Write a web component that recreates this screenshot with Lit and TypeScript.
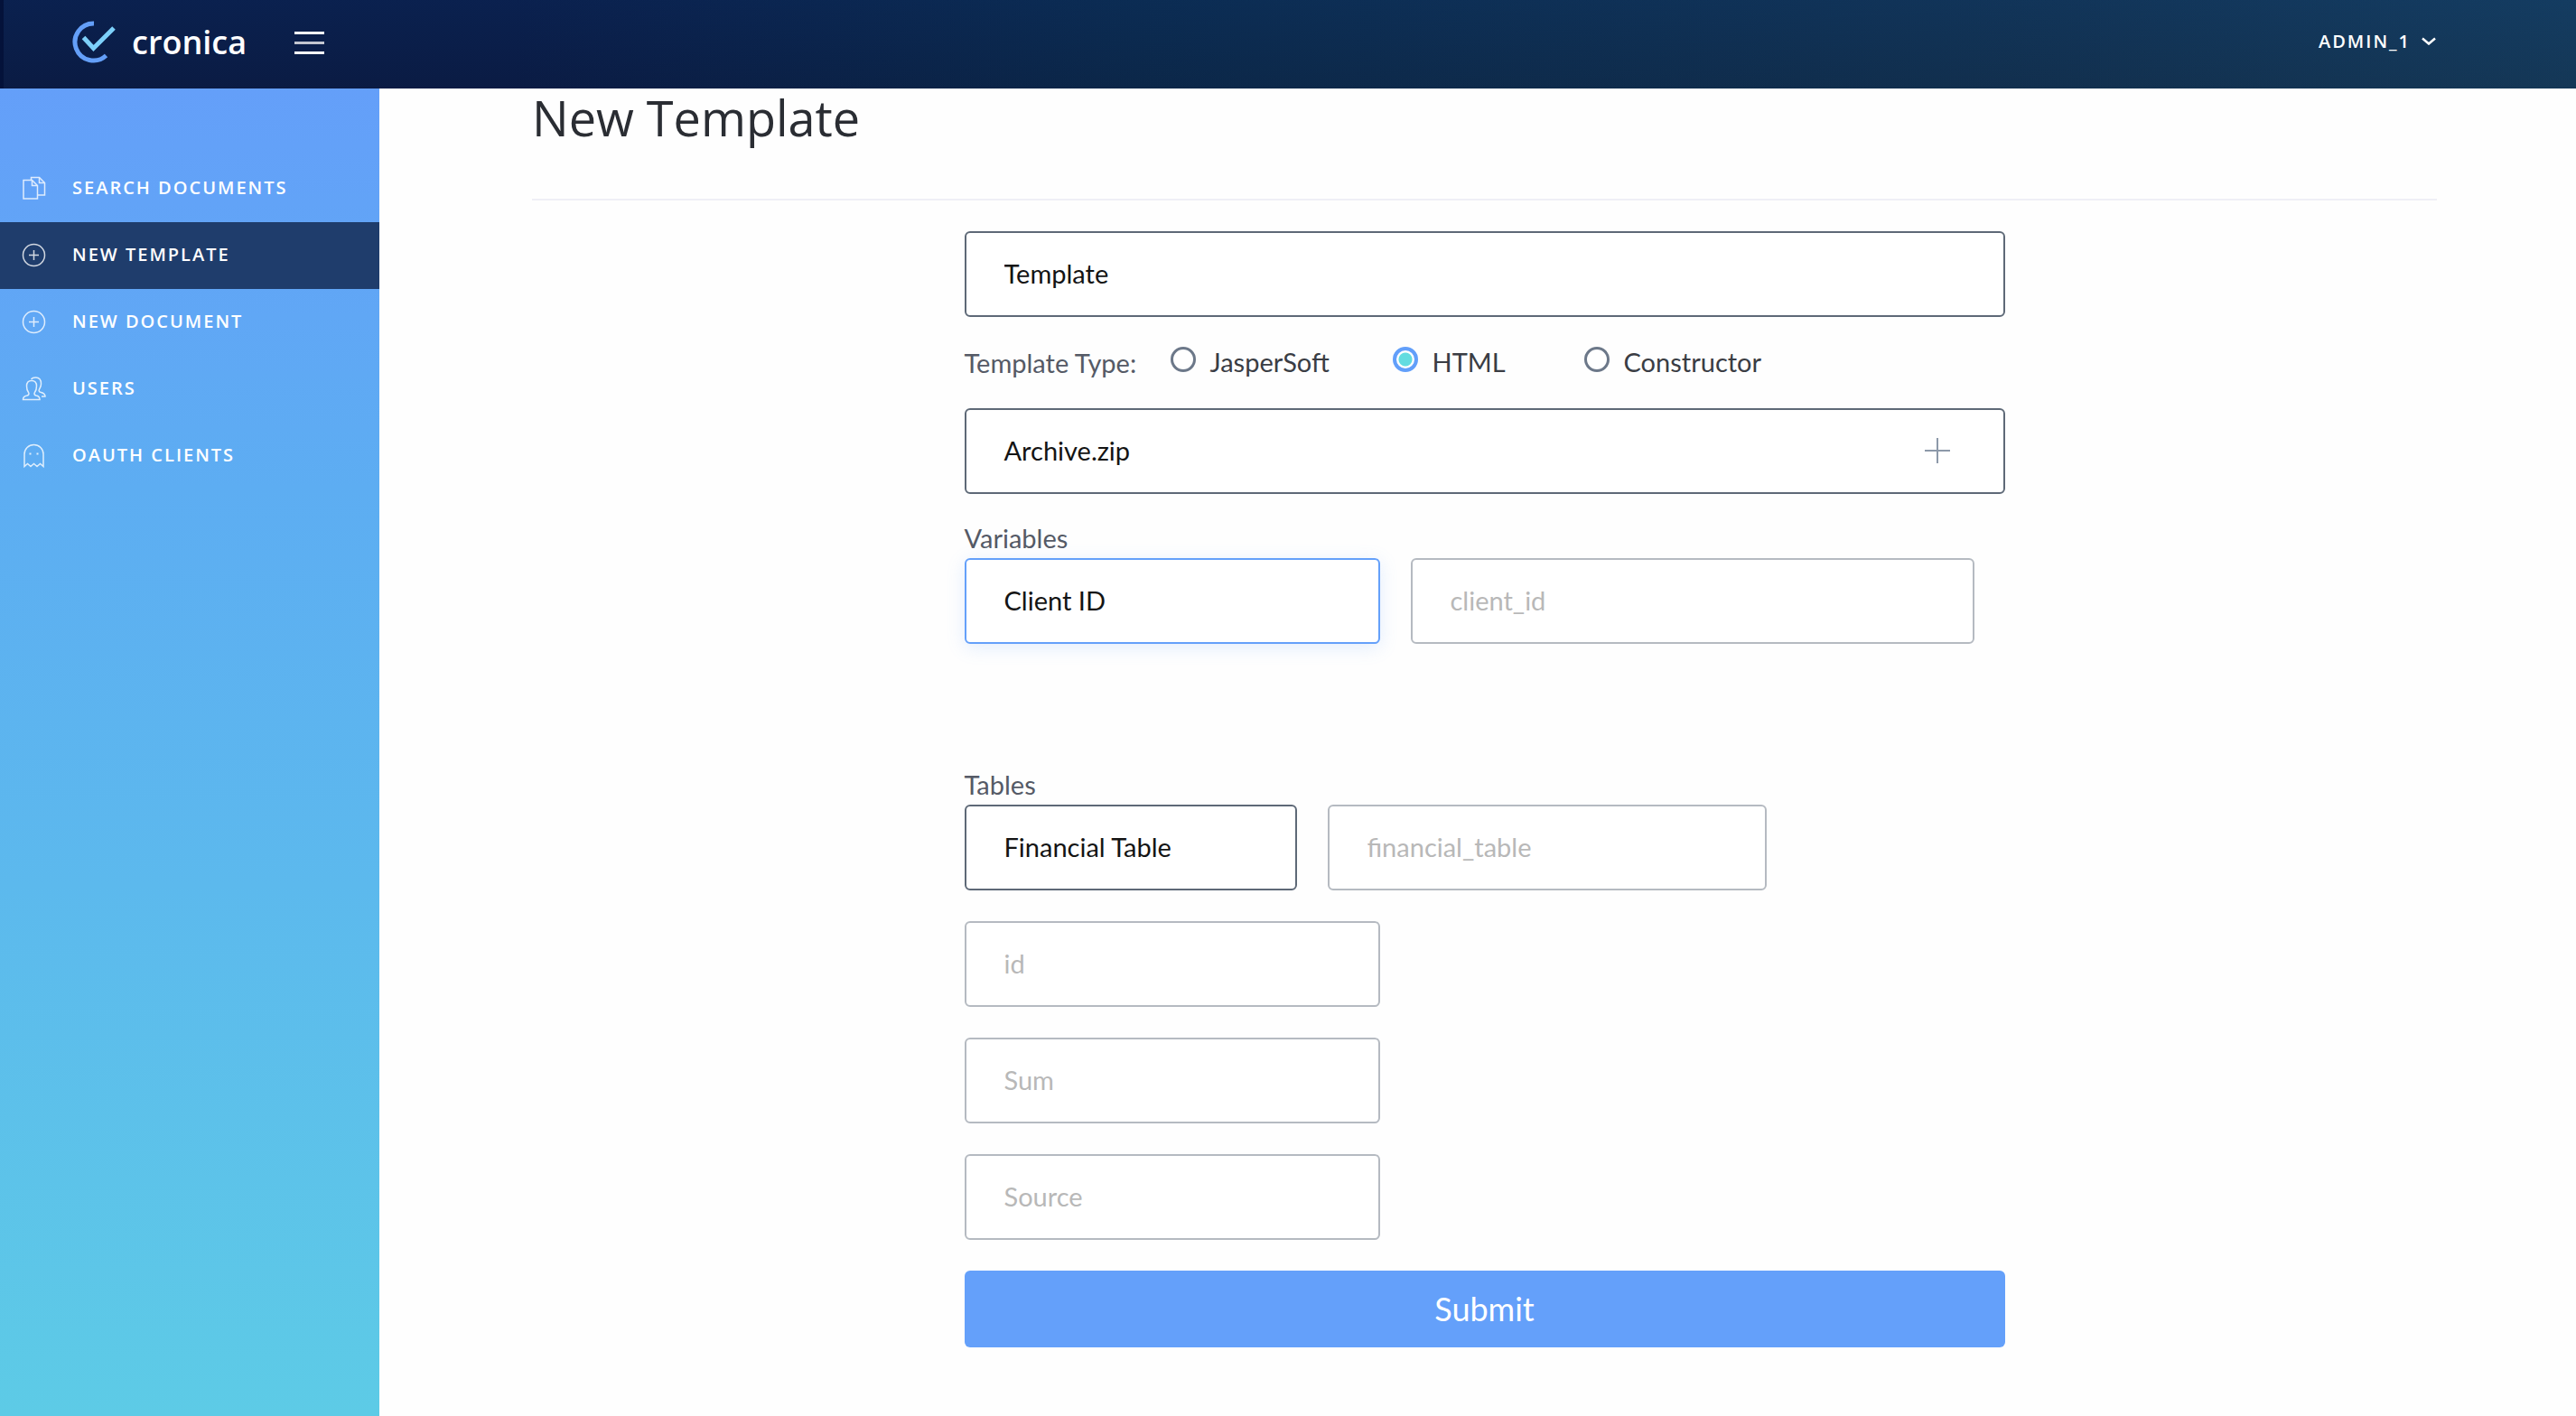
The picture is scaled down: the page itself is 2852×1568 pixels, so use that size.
import { LitElement, html, css, svg, nothing } from "lit";
import { customElement, state } from "lit/decorators.js";
import { classMap } from "lit/directives/class-map.js";

type IconName = "documents" | "plus" | "users" | "ghost";

const icons: Record<IconName, unknown> = {
  documents: svg`
    <path d="M2 4.5h9.5l6 6V25H2z" />
    <path d="M11.5 4.5v6h6" />
    <path d="M10.5 4.5v-3h9l6 6V21h-8" />
    <path d="M19.5 1.5v6h6" />`,
  plus: svg`
    <circle cx="13.5" cy="13.5" r="12" />
    <path d="M13.5 8v11M8 13.5h11" />`,
  users: svg`
    <path d="M1.5 25.5h18.5c0-3-1-4-4-4.5-2-.5-2.5-2-1.5-3.5 1.5-2 2-4 2-7 0-4-2-6-5.5-6s-5.5 2-5.5 6c0 3 .5 5 2 7 1 1.500.5 3-1.500 3.500-3 .5-4.500 1.500-4.500 4.500z" />
    <path d="M10.5 3c1-1.500 3-2 5-2 4 0 6 3 6 7 0 3-1 4-2 6-1 2 0 3 2 3.500 3 .8 4.500 1.500 4.500 4.500h-4" />`,
  ghost: svg`
    <path d="M3 25.500V12a10.500 10.500 0 0 1 21 0v13.500l-3.500-3-3.500 3-3.500-3-3.500 3-3.500-3z" />
    <path d="M8.500 11.500h2M16.500 11.500h2" stroke-width="2" />`,
};

const navItems: { label: string; icon: IconName; active?: boolean }[] = [
  { label: "SEARCH DOCUMENTS", icon: "documents" },
  { label: "NEW TEMPLATE", icon: "plus", active: true },
  { label: "NEW DOCUMENT", icon: "plus" },
  { label: "USERS", icon: "users" },
  { label: "OAUTH CLIENTS", icon: "ghost" },
];

const templateTypes = ["JasperSoft", "HTML", "Constructor"];
const tableColumns = ["id", "Sum", "Source"];

@customElement("app-header")
export class AppHeader extends LitElement {
  static styles = css`
    :host {
      display: block;
      font-family: "Open Sans", "Noto Sans", sans-serif;
      color: #fff;
    }
    .bar {
      box-sizing: border-box;
      height: 98px;
      padding: 0 155px 4px 76px;
      border-left: 4px solid #04123a;
      display: flex;
      align-items: center;
      background:
        linear-gradient(to bottom, rgba(8, 48, 90, 0.2), rgba(8, 20, 30, 0.18)),
        linear-gradient(to right, #0b1d4c 0%, #0b1d4c 20%, #0c2b52 44%, #143659 80%, #173f63 100%);
    }
    .brand {
      display: flex;
      align-items: center;
      gap: 18px;
      color: inherit;
      text-decoration: none;
      font-size: 36px;
      font-weight: 600;
      line-height: 48px;
    }
    .logo {
      width: 48px;
      height: 48px;
    }
    button {
      font: inherit;
      color: inherit;
      background: none;
      border: 0;
      padding: 0;
      cursor: pointer;
    }
    .menu {
      margin-left: 53px;
      width: 33px;
      display: grid;
      gap: 8px;
    }
    .line {
      height: 3px;
      background: #fff;
    }
    .line.mid {
      background: #c3c6d0;
    }
    .user {
      margin-left: auto;
      padding-bottom: 4px;
      display: flex;
      align-items: center;
      gap: 12px;
      font-size: 20px;
      font-weight: 600;
      letter-spacing: 2px;
    }
    .chevron {
      width: 16px;
      height: 10px;
    }
  `;

  render() {
    return html`
      <header class="bar">
        <a class="brand" href="#home">
          <svg class="logo" viewBox="0 0 48 48" fill="none" stroke-width="5" aria-hidden="true">
            <path d="M24 3A20.500 20.500 0 1 0 37.500 38.500" stroke="#649ff8" />
            <path d="M12.500 18.500 23.500 30.500 46 8" stroke="#7dd0fa" />
          </svg>
          <span>cronica</span>
        </a>
        <button class="menu" type="button" aria-label="Menu">
          <span class="line"></span>
          <span class="line mid"></span>
          <span class="line"></span>
        </button>
        <button class="user" type="button">
          <span>ADMIN_1</span>
          <svg class="chevron" viewBox="0 0 16 10" fill="none" stroke="#fff" stroke-width="2.5" aria-hidden="true">
            <path d="M1 2.500 8 8.500 15 2.500" />
          </svg>
        </button>
      </header>
    `;
  }
}

@customElement("app-sidebar")
export class AppSidebar extends LitElement {
  static styles = css`
    :host {
      display: block;
      font-family: "Open Sans", "Noto Sans", sans-serif;
      background: linear-gradient(to bottom, #649ff9 0%, #5dadf2 30%, #5cb9ed 60%, #5dcbe6 100%);
    }
    .nav {
      display: flex;
      flex-direction: column;
      padding-top: 74px;
    }
    .item {
      display: flex;
      align-items: center;
      gap: 28px;
      height: 74px;
      padding-left: 24px;
      color: #fff;
      text-decoration: none;
      font-size: 20px;
      font-weight: 600;
      letter-spacing: 2px;
    }
    .item.active {
      background: #1f3d6c;
    }
    .icon {
      width: 28px;
      height: 28px;
      opacity: 0.8;
    }
    .label {
      padding-bottom: 4px;
    }
  `;

  render() {
    return html`
      <nav class="nav">
        ${navItems.map(
          (item) => html`
            <a
              class=${classMap({ item: true, active: !!item.active })}
              href="#"
              aria-current=${item.active ? "page" : nothing}
            >
              <svg class="icon" viewBox="0 0 28 28" fill="none" stroke="#fff" stroke-width="1.5" aria-hidden="true">
                ${icons[item.icon]}
              </svg>
              <span class="label">${item.label}</span>
            </a>
          `,
        )}
      </nav>
    `;
  }
}

@customElement("template-form")
export class TemplateForm extends LitElement {
  static styles = css`
    :host {
      display: block;
      font-family: Lato, "Open Sans", sans-serif;
      font-size: 29px;
      font-weight: 400;
      line-height: 34px;
      color: #3a3d44;
    }
    .form {
      max-width: 1152px;
      margin: 0 auto;
      padding: 34px 0 76px;
    }
    .field {
      box-sizing: border-box;
      display: block;
      width: 100%;
      min-width: 0;
      height: 95px;
      padding: 0 42px 2px;
      border: 2px solid #b5bac1;
      border-radius: 6px;
      background: #fff;
      color: #141414;
      font: inherit;
      outline: none;
    }
    .field::placeholder {
      color: #b8b8b8;
      opacity: 1;
    }
    .field.filled {
      border-color: #5e6977;
    }
    .field.current {
      border-color: #64a0fa;
      box-shadow: 0 4px 20px rgba(100, 160, 250, 0.18);
    }
    .types {
      display: grid;
      grid-template-columns: 228px 246px 212px auto;
      align-items: center;
      height: 101px;
    }
    .caption {
      color: #555a66;
    }
    .type {
      display: flex;
      align-items: flex-start;
      gap: 16px;
      padding-bottom: 2px;
    }
    .radio {
      appearance: none;
      box-sizing: border-box;
      width: 28px;
      height: 28px;
      margin: 0;
      border: 3px solid #6c7889;
      border-radius: 50%;
      background: #fff;
    }
    .radio:checked {
      border: 4px solid #629ffa;
      background: radial-gradient(circle, #63dce0 0 7px, #fff 8px);
    }
    .upload {
      display: flex;
      align-items: center;
      justify-content: space-between;
      padding-right: 58px;
      cursor: pointer;
    }
    .file {
      position: absolute;
      width: 1px;
      height: 1px;
      opacity: 0;
    }
    .add {
      width: 30px;
      height: 30px;
    }
    .variables {
      padding: 32px 0 139px;
    }
    .group .caption {
      display: block;
      margin-bottom: 5px;
    }
    .pair {
      display: grid;
      gap: 34px;
    }
    .variable {
      grid-template-columns: 460fr 624fr;
      padding-right: 34px;
    }
    .tables {
      grid-template-columns: 368fr 486fr 230fr;
    }
    .columns {
      display: grid;
      grid-template-columns: 460fr 658fr;
      gap: 34px;
      padding: 34px 0;
    }
    .columns .field {
      grid-column: 1;
    }
    .submit {
      display: block;
      width: 100%;
      height: 85px;
      padding: 0 0 2px;
      border: 0;
      border-radius: 6px;
      background: #64a0fa;
      color: #fff;
      font: inherit;
      font-size: 36px;
      cursor: pointer;
    }
  `;

  @state() private type = "HTML";

  render() {
    return html`
      <form class="form" @submit=${(e: Event) => e.preventDefault()}>
        <input class="field filled" aria-label="Template name" .value=${"Template"} />

        <div class="types" role="radiogroup" aria-labelledby="type-caption">
          <span class="caption" id="type-caption">Template Type:</span>
          ${templateTypes.map(
            (t) => html`
              <label class="type">
                <input
                  class="radio"
                  type="radio"
                  name="type"
                  .checked=${this.type === t}
                  @change=${() => (this.type = t)}
                />
                <span>${t}</span>
              </label>
            `,
          )}
        </div>

        <label class="field filled upload">
          <input class="file" type="file" />
          <span>Archive.zip</span>
          <svg class="add" viewBox="0 0 30 30" fill="none" stroke="#8d99a9" stroke-width="2" aria-hidden="true">
            <path d="M15 1v28M1 15h28" />
          </svg>
        </label>

        <div class="group variables">
          <label class="caption" for="variable">Variables</label>
          <div class="pair variable">
            <input class="field current" id="variable" .value=${"Client ID"} />
            <input class="field" placeholder="client_id" aria-label="Variable key" />
          </div>
        </div>

        <div class="group">
          <label class="caption" for="table">Tables</label>
          <div class="pair tables">
            <input class="field filled" id="table" .value=${"Financial Table"} />
            <input class="field" placeholder="financial_table" aria-label="Table key" />
          </div>
          <div class="columns">
            ${tableColumns.map(
              (c) => html`<input class="field" placeholder=${c} aria-label=${`Column ${c}`} />`,
            )}
          </div>
        </div>

        <button class="submit" type="submit">Submit</button>
      </form>
    `;
  }
}

@customElement("app-root")
export class AppRoot extends LitElement {
  static styles = css`
    :host {
      display: block;
      font-family: "Open Sans", "Noto Sans", sans-serif;
    }
    .page {
      min-height: 100vh;
      display: grid;
      grid-template-rows: auto 1fr;
      background: #fefefe;
    }
    .body {
      display: grid;
      grid-template-columns: 420px minmax(0, 1fr);
    }
    .content {
      padding: 0 154px 0 169px;
    }
    .title {
      margin: 0;
      padding-bottom: 58px;
      border-bottom: 2px solid #efeff6;
      font-size: 54px;
      font-weight: 400;
      line-height: 64px;
      color: #2a2d33;
    }
  `;

  render() {
    return html`
      <div class="page">
        <app-header></app-header>
        <div class="body">
          <app-sidebar></app-sidebar>
          <main class="content">
            <h1 class="title">New Template</h1>
            <template-form></template-form>
          </main>
        </div>
      </div>
    `;
  }
}
